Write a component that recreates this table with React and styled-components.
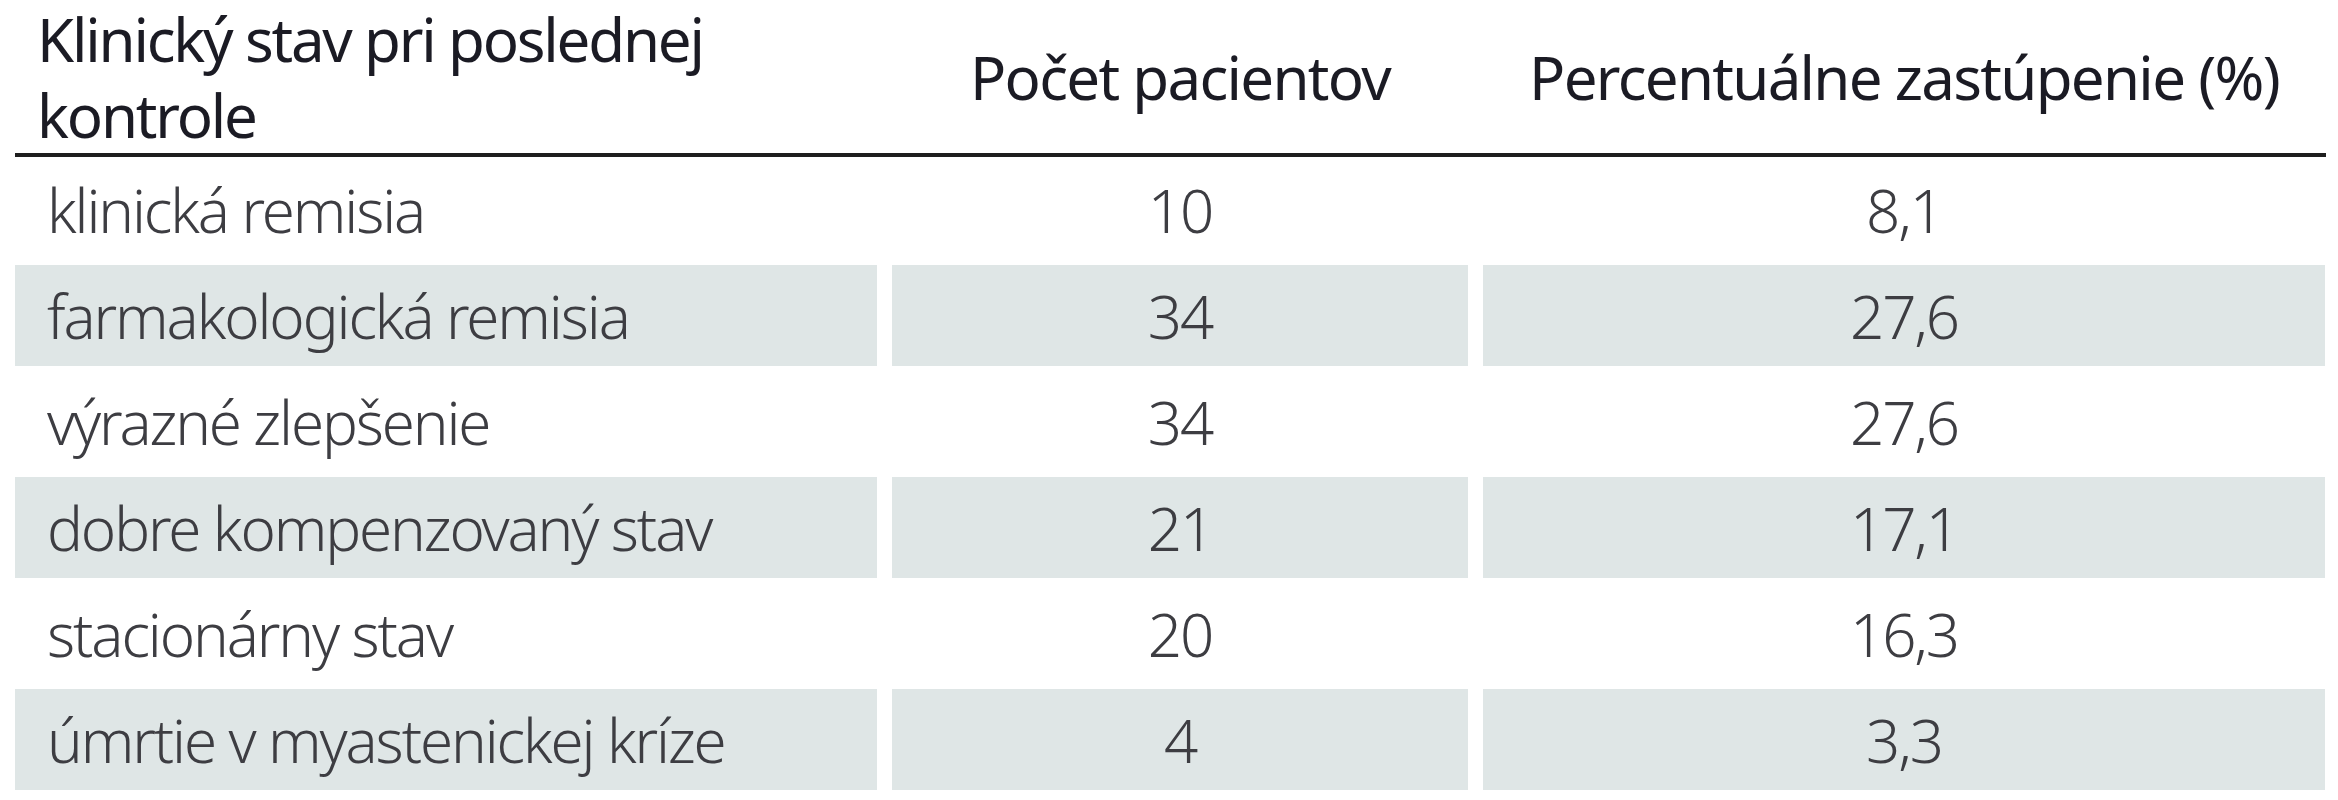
import React from 'react';
import styled, { createGlobalStyle } from 'styled-components';

const GlobalStyle = createGlobalStyle`
  html, body {
    margin: 0;
    padding: 0;
    background: #ffffff;
  }
  body {
    font-family: "Noto Sans", "Open Sans", "Liberation Sans", sans-serif;
  }
`

const Table = styled.div`
  width: 2311px;
  margin-left: 15px;
  display: flex;
  flex-direction: column;
`

const HeaderRow = styled.div`
  display: grid;
  grid-template-columns: 862px 576px 842px;
  column-gap: 15px;
  height: 153px;
  border-bottom: 4px solid #1e1e1e;
  margin-bottom: 2px;
`

const HeaderCell = styled.div`
  display: flex;
  align-items: center;
  justify-content: ${props => (props.$left ? 'flex-start' : 'center')};
  padding-left: ${props => (props.$left ? '22px' : '0')};
  font-size: 60px;
  line-height: 76px;
  font-weight: 400;
  letter-spacing: ${props => (props.$left ? '-2.2px' : '-1.7px')};
  color: #1b1b24;
  text-align: ${props => (props.$left ? 'left' : 'center')};
`

const Body = styled.div`
  display: flex;
  flex-direction: column;
  gap: 5px;
`

const Row = styled.div`
  display: grid;
  grid-template-columns: 862px 576px 842px;
  column-gap: 15px;
  height: 101px;
`

const Cell = styled.div`
  display: flex;
  align-items: center;
  justify-content: ${props => (props.$left ? 'flex-start' : 'center')};
  padding-left: ${props => (props.$left ? '32px' : '0')};
  background: ${props => (props.$shaded ? '#dfe6e6' : 'transparent')};
  font-size: 60px;
  font-weight: 300;
  letter-spacing: -2.1px;
  color: #3d3d42;
  white-space: nowrap;
`

const rows = [
  ['klinická remisia', '10', '8,1'],
  ['farmakologická remisia', '34', '27,6'],
  ['výrazné zlepšenie', '34', '27,6'],
  ['dobre kompenzovaný stav', '21', '17,1'],
  ['stacionárny stav', '20', '16,3'],
  ['úmrtie v myastenickej kríze', '4', '3,3'],
]

export default function App() {
  return (
    <>
      <GlobalStyle />
      <Table>
        <HeaderRow>
          <HeaderCell $left>Klinický stav pri poslednej<br />kontrole</HeaderCell>
          <HeaderCell>Počet pacientov</HeaderCell>
          <HeaderCell>Percentuálne zastúpenie (%)</HeaderCell>
        </HeaderRow>
        <Body>
          {rows.map((r, i) => (
            <Row key={i}>
              <Cell $left $shaded={i % 2 === 1}>{r[0]}</Cell>
              <Cell $shaded={i % 2 === 1}>{r[1]}</Cell>
              <Cell $shaded={i % 2 === 1}>{r[2]}</Cell>
            </Row>
          ))}
        </Body>
      </Table>
    </>
  )
}
